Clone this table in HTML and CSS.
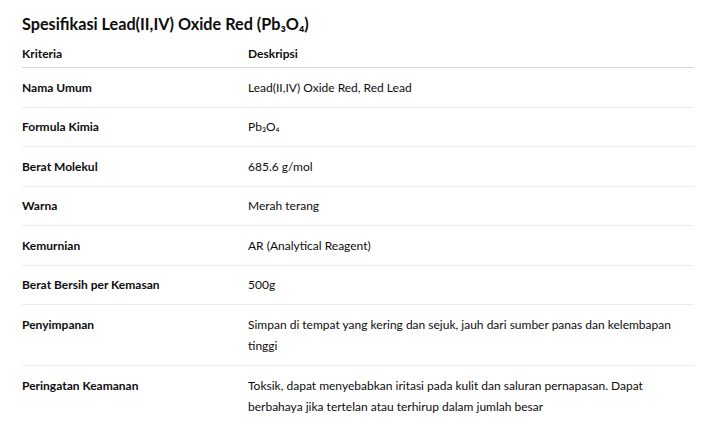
FILE: index.html
```html
<!DOCTYPE html>
<html lang="id">
<head>
<meta charset="utf-8">
<link rel="stylesheet" href="styles.css">
</head>
<body>
<div class="page">
  <h2 class="title">Spesifikasi Lead(II,IV) Oxide Red (Pb₃O₄)</h2>
  <table class="spec">
    <thead>
      <tr><th class="c1">Kriteria</th><th class="c2">Deskripsi</th></tr>
    </thead>
    <tbody>
      <tr><td class="c1">Nama Umum</td><td class="c2">Lead(II,IV) Oxide Red, Red Lead</td></tr>
      <tr><td class="c1">Formula Kimia</td><td class="c2">Pb₃O₄</td></tr>
      <tr><td class="c1">Berat Molekul</td><td class="c2">685.6 g/mol</td></tr>
      <tr><td class="c1">Warna</td><td class="c2">Merah terang</td></tr>
      <tr><td class="c1">Kemurnian</td><td class="c2">AR (Analytical Reagent)</td></tr>
      <tr><td class="c1">Berat Bersih per Kemasan</td><td class="c2">500g</td></tr>
      <tr><td class="c1">Penyimpanan</td><td class="c2">Simpan di tempat yang kering dan sejuk, jauh dari sumber panas dan kelembapan tinggi</td></tr>
      <tr><td class="c1">Peringatan Keamanan</td><td class="c2">Toksik, dapat menyebabkan iritasi pada kulit dan saluran pernapasan. Dapat berbahaya jika tertelan atau terhirup dalam jumlah besar</td></tr>
    </tbody>
  </table>
</div>
</body>
</html>
```
FILE: styles.css
```css
html, body {
  margin: 0;
  padding: 0;
  background: #ffffff;
}
body {
  font-family: "Lato", "Noto Sans", sans-serif;
  color: #0d0d0d;
}
.page {
  padding: 14px 15px 0 22px;
}
.title {
  margin: 0;
  font-size: 16.2px;
  line-height: 20px;
  font-weight: 700;
}
.spec {
  width: 672px;
  border-collapse: collapse;
  margin-top: 0;
  font-size: 12px;
  line-height: 21.5px;
}
.spec th {
  text-align: left;
  font-weight: 700;
  padding: 8.5px 0 3px 0;
  border-bottom: 1px solid #d9d9d9;
  vertical-align: top;
}
.spec td {
  padding: 8.5px 0;
  border-bottom: 1px solid #ececec;
  vertical-align: top;
}
.spec tbody tr:last-child td {
  border-bottom: none;
}
.spec td.c1 {
  font-weight: 700;
}
.c1 {
  width: 226px;
}
```
